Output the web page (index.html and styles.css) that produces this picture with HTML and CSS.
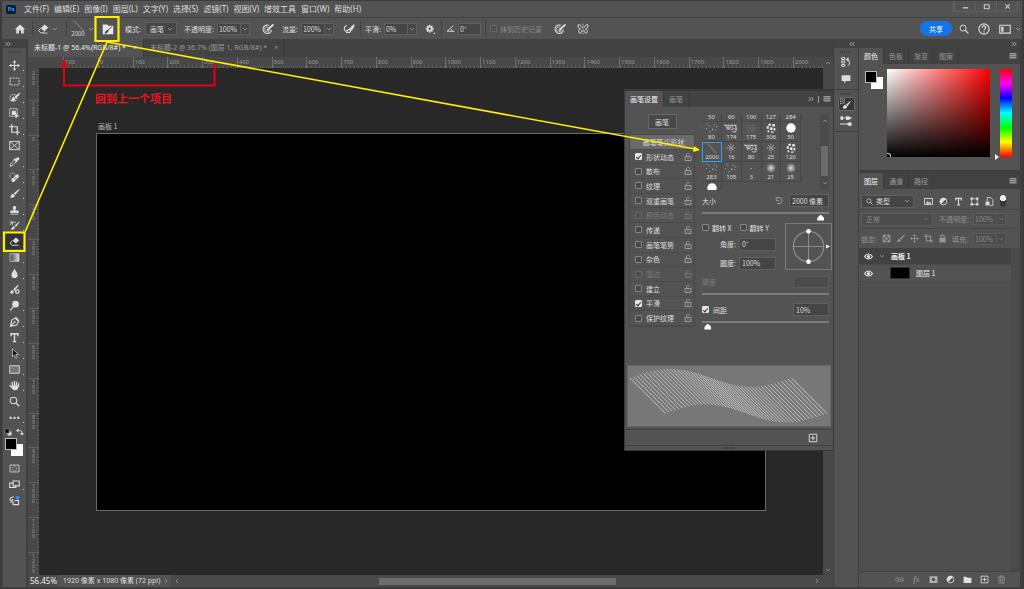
FILE: index.html
```html
<!DOCTYPE html>
<html lang="zh-CN">
<head>
<meta charset="utf-8">
<title>未标题-1</title>
<link rel="stylesheet" href="styles.css">
</head>
<body>
<svg class="sprite" aria-hidden="true">
  <symbol id="home" viewBox="0 0 16 16"><path fill="currentColor" d="M8 2 1 8.400h2V14h3.600v-4h2.800v4H13V8.400h2z"/></symbol>
  <symbol id="eraser" viewBox="0 0 16 16"><path fill="currentColor" d="M10 2l5 4-5 5-5-4z"/><path fill="none" stroke="currentColor" stroke-width="1.200" d="M5 7 2 10l3 3h3l2-2M8 13.500h6"/></symbol>
  <symbol id="down" viewBox="0 0 16 16"><path fill="none" stroke="currentColor" stroke-width="2" d="M3 5.500 8 10.500 13 5.500"/></symbol>
  <symbol id="up" viewBox="0 0 16 16"><path fill="none" stroke="currentColor" stroke-width="2" d="M3 10.500 8 5.500 13 10.500"/></symbol>
  <symbol id="right" viewBox="0 0 16 16"><path fill="none" stroke="currentColor" stroke-width="2" d="M5.500 3 10.500 8 5.500 13"/></symbol>
  <symbol id="left" viewBox="0 0 16 16"><path fill="none" stroke="currentColor" stroke-width="2" d="M10.500 3 5.500 8 10.500 13"/></symbol>
  <symbol id="dright" viewBox="0 0 16 16"><path fill="none" stroke="currentColor" stroke-width="2" d="M2 3l5 5-5 5M9 3l5 5-5 5"/></symbol>
  <symbol id="dleft" viewBox="0 0 16 16"><path fill="none" stroke="currentColor" stroke-width="2" d="M7 3 2 8l5 5M14 3 9 8l5 5"/></symbol>
  <symbol id="brushpanel" viewBox="0 0 16 16"><path fill="#e8e8e8" d="M1 2h6l1 1.500h7V15H1z"/><path d="M13 5 8 9.500M7.500 9.500l1 1.200-3 2.800-1.200 0 .4-2z" fill="#444" stroke="#444" stroke-width="1.300"/></symbol>
  <symbol id="pressure" viewBox="0 0 16 16"><path fill="none" stroke="currentColor" stroke-width="1.400" d="M9.500 3.200A5.700 5.700 0 1 0 12.700 9"/><path fill="currentColor" d="M14.500 1 16 2.500 9 9.500l-3 1 1-3z"/><path fill="none" stroke="currentColor" d="M8 5.500A3.300 3.300 0 1 0 10 9"/></symbol>
  <symbol id="airbrush" viewBox="0 0 16 16"><path fill="none" stroke="currentColor" stroke-width="1.500" d="M5 3C1 5 1 9 3 10.500s3-2 5-2 3 2 1 4H4"/><path fill="currentColor" d="M15 1 9 6.500v3l3 .5 3-5z"/></symbol>
  <symbol id="gear" viewBox="0 0 16 16"><circle cx="7.500" cy="7.500" r="3.400" fill="none" stroke="currentColor" stroke-width="2.800"/><path stroke="currentColor" stroke-width="2.200" d="M7.500 1v2.500M7.500 11.500V14M1 7.500h2.500M11.500 7.500H14M3 3l1.500 1.500M10.500 10.500 12 12M12 3l-1.500 1.500M4.500 10.500 3 12"/><path fill="currentColor" d="M14 14h2v2h-2z"/></symbol>
  <symbol id="angle" viewBox="0 0 16 16"><path fill="none" stroke="currentColor" stroke-width="1.600" d="M13 3 2 13h13M8 8c2 1 2.500 3 2.500 5"/></symbol>
  <symbol id="butterfly" viewBox="0 0 16 16"><path fill="none" stroke="currentColor" stroke-width="1.300" d="M6.500 6C5 2.500 1.500 1.500 1.500 2.500c0 3 0 5 3 5.500-3 1-2.500 5-1 5.500s3-1 3-4M9.500 6c1.500-3.500 5-4.500 5-3.500 0 3 0 5-3 5.500 3 1 2.500 5 1 5.500s-3-1-3-4"/><path stroke="currentColor" stroke-dasharray="2 1" d="M8 1v14"/></symbol>
  <symbol id="search" viewBox="0 0 16 16"><circle cx="6.500" cy="6.500" r="4.800" fill="none" stroke="currentColor" stroke-width="1.500"/><path stroke="currentColor" stroke-width="2" d="m10 10 5 5"/></symbol>
  <symbol id="help" viewBox="0 0 16 16"><circle cx="8" cy="8" r="6.800" fill="none" stroke="currentColor" stroke-width="1.500"/><path fill="none" stroke="currentColor" stroke-width="1.600" d="M5.700 6.300c0-3.300 4.800-3 4.600-.2C10.200 7.800 8 7.600 8 9.600M8 11v1.600"/></symbol>
  <symbol id="workspace" viewBox="0 0 16 16"><path fill="none" stroke="currentColor" stroke-width="1.400" d="M1 3h14v10.500H1z"/><path fill="currentColor" d="M3 5h3v6.500H3z"/></symbol>
  <symbol id="move" viewBox="0 0 16 16"><path stroke="currentColor" stroke-width="1.400" d="M8 3v10M3 8h10"/><path fill="currentColor" d="m8 0 2.500 3.500h-5zM8 16l2.500-3.500h-5zM0 8l3.500-2.500v5zM16 8l-3.500-2.500v5z"/></symbol>
  <symbol id="marquee" viewBox="0 0 16 16"><path fill="none" stroke="currentColor" stroke-width="1.400" stroke-dasharray="2.500 1.500" d="M1.500 3h13v10h-13z"/></symbol>
  <symbol id="quick" viewBox="0 0 16 16"><circle cx="6.500" cy="8.500" r="5" fill="none" stroke="currentColor" stroke-width="1.500" stroke-dasharray="2 1.400"/><path fill="currentColor" d="M15 1 8 7l2 2.500L16 3zM7 7c-4 1-1 5-5 5 3 3 8 1 7-3z"/></symbol>
  <symbol id="object" viewBox="0 0 16 16"><path fill="none" stroke="currentColor" stroke-width="1.300" d="M1 1h11v11H1z" stroke-dasharray="3 1"/><path fill="currentColor" d="M4 4h6v6H4zM8 6l7 6-3 .5-2 3z"/></symbol>
  <symbol id="crop" viewBox="0 0 16 16"><path fill="none" stroke="currentColor" stroke-width="1.800" d="M4 0v12h12M0 4h12v12"/></symbol>
  <symbol id="frame" viewBox="0 0 16 16"><path fill="none" stroke="currentColor" stroke-width="1.300" d="M1 2h14v12H1zM1 2l14 12M15 2 1 14"/></symbol>
  <symbol id="dropper" viewBox="0 0 16 16"><path fill="currentColor" d="M11 3c2-3 6 0 3 3l-2 1 .5 1-1.500 1.300L6.500 5 8 3.700l1 .3z"/><path fill="none" stroke="currentColor" stroke-width="1.300" d="M8 6 2.500 11.500 1.500 15l3-1L10.500 8.500"/></symbol>
  <symbol id="heal" viewBox="0 0 16 16"><path stroke="currentColor" stroke-width="5" stroke-linecap="round" d="m6 12 6-6"/><circle cx="5" cy="5.500" r="4" fill="none" stroke="currentColor" stroke-width="1.200" stroke-dasharray="1.500 1"/><path stroke="#535353" d="m7 8 3 3M8.500 9.500l2-2"/></symbol>
  <symbol id="brush" viewBox="0 0 16 16"><path fill="currentColor" d="M15 1 7 7.500 9 10 15.500 2zM6 8.500c-3 0-2 4-5 4 2 3 7 2 7.500-1.500z"/></symbol>
  <symbol id="stamp" viewBox="0 0 16 16"><path fill="currentColor" d="M6.500 8C2 1 14 1 9.500 8v1.500H14V13H2V9.500h4.500zM2 14h12v1.200H2z"/></symbol>
  <symbol id="history" viewBox="0 0 16 16"><path fill="currentColor" d="M15 2 8 8l2 2 5.500-7zM7 9c-3 0-2 4-5 4 3 2 6 1 6.500-2z"/><path fill="none" stroke="currentColor" stroke-width="1.300" d="M1 3h4v4M2 7c1-4 6-5 8-3"/></symbol>
  <symbol id="bgeraser" viewBox="0 0 16 16"><path fill="currentColor" d="m10 2 5 4-5 5-5-4z"/><path fill="none" stroke="currentColor" stroke-width="1.300" d="M5 7 1.500 10l3 3.500H14"/></symbol>
  <symbol id="gradient" viewBox="0 0 16 16"><linearGradient id="lg"><stop stop-color="#444"/><stop offset="1" stop-color="#ddd"/></linearGradient><path fill="url(#lg)" stroke="currentColor" d="M1.500 2.500h13v11h-13z"/></symbol>
  <symbol id="drop" viewBox="0 0 16 16"><path fill="currentColor" d="M8 1c2 4 4.500 6 4.500 9a4.500 4.500 0 0 1-9 0C3.500 7 6 5 8 1z"/></symbol>
  <symbol id="mixer" viewBox="0 0 16 16"><path fill="currentColor" d="M13 1 6 8l2 2 6-8zM5 9c-3 0-2 3-4 4 3 2 6 1 6-2z"/><circle cx="12" cy="11" r="2.500" fill="none" stroke="currentColor" stroke-width="1.800"/></symbol>
  <symbol id="dodge" viewBox="0 0 16 16"><circle cx="9.500" cy="6" r="4.800" fill="currentColor"/><path stroke="currentColor" stroke-width="1.800" d="M7 9 2 15"/></symbol>
  <symbol id="pen" viewBox="0 0 16 16"><path fill="none" stroke="currentColor" stroke-width="1.500" d="m9 3 5 5-3 5-9 2 2-9zM2 15l6-6"/><path fill="currentColor" d="m10 1 5 5-1.500 1.500-5-5z"/><circle cx="8.500" cy="8.500" r="1.200" fill="currentColor"/></symbol>
  <symbol id="type" viewBox="0 0 16 16"><path fill="none" stroke="currentColor" stroke-width="2" d="M3 6V2.500h10V6M8 2.500V14M5.500 14h5"/></symbol>
  <symbol id="arrow" viewBox="0 0 16 16"><path fill="#111" stroke="currentColor" d="M5 1v12l3-3 2 5 2-1-2-4.500h4z"/></symbol>
  <symbol id="rect" viewBox="0 0 16 16"><path fill="#777" stroke="currentColor" stroke-width="1.300" d="M1 2.500h14v11H1z"/></symbol>
  <symbol id="hand" viewBox="0 0 16 16"><path fill="none" stroke="currentColor" stroke-width="1.900" stroke-linecap="round" d="M5.500 9 4.500 3.500M8 8V2M10.500 8.500l.8-5.500M13 9.500l1.300-4M4.500 11 1.500 8"/><path fill="currentColor" d="M4 8.500h10c0 4-2 6.500-5 6.500s-4-2-6-5z"/></symbol>
  <symbol id="dots" viewBox="0 0 16 16"><path fill="currentColor" d="M1 7h3v3H1zM6.500 7h3v3h-3zM12 7h3v3h-3z"/></symbol>
  <symbol id="mask" viewBox="0 0 16 16"><path fill="none" stroke="currentColor" stroke-width="1.200" d="M1.500 3h13v10h-13z"/><circle cx="8" cy="8" r="3" fill="none" stroke="currentColor" stroke-dasharray="1.500 .8"/></symbol>
  <symbol id="screen" viewBox="0 0 16 16"><path fill="none" stroke="currentColor" stroke-width="1.500" d="M6 3h9v7H6zM6 6H1v6.500h9V10"/></symbol>
  <symbol id="cloud" viewBox="0 0 16 16"><path fill="none" stroke="currentColor" stroke-width="1.500" d="M7 3C2 2 0 7 3 9M6 6l-3 4 4 1M8 8h6v6H6v-3"/><circle cx="12.500" cy="4" r="3" fill="#2d8ceb"/></symbol>
  <symbol id="swap" viewBox="0 0 16 16"><path fill="none" stroke="currentColor" stroke-width="2" d="M3 5h4c4 0 5 2 5 6"/><path fill="currentColor" d="M5 1v8L0 5zM8 10h8l-4 5z"/></symbol>
  <symbol id="default" viewBox="0 0 16 16"><path fill="#ddd" d="M7 7h8v8H7z"/><path fill="#111" stroke="#aaa" d="M1.500 1.500h9v9h-9z"/></symbol>
  <symbol id="hist" viewBox="0 0 16 16"><path fill="none" stroke="currentColor" stroke-width="1.500" d="M1 1h5v3H1zM1 6.500h5v3H1zM1 12h5v3H1zM9 4c6 0 6 7 2 10"/><path fill="currentColor" d="M12 0v8L8 4z"/></symbol>
  <symbol id="comment" viewBox="0 0 16 16"><path fill="currentColor" d="M1 2h14v9H8l-3 4v-4H1z"/></symbol>
  <symbol id="brushset" viewBox="0 0 16 16"><path fill="currentColor" d="M15.500 3 8 8.500l2 2.500zM7 9c-3 0-2 4-4 4 3 3 7 1 6.500-2z"/><path stroke="currentColor" stroke-width="1.200" d="M0 1.500h4M0 4.500h4M0 7.500h4M5.500 1v7" stroke-dasharray="1.500 .8"/></symbol>
  <symbol id="sliders" viewBox="0 0 16 16"><path stroke="currentColor" stroke-width="1.500" d="M0 4h16M0 12h16"/><path fill="currentColor" d="M8 1.500h4l3 2.500-3 2.500H8zM1 1.500h3v5H1zM15 9.500h-3L9 12l3 2.500h3z"/></symbol>
  <symbol id="menu" viewBox="0 0 16 16"><path stroke="currentColor" stroke-width="3" d="M1 3.500h14M1 7.500h14M1 11.500h14"/></symbol>
  <symbol id="image" viewBox="0 0 16 16"><path fill="none" stroke="currentColor" stroke-width="1.600" d="M1 2.500h14v11H1z"/><path fill="currentColor" d="m3 12 3.500-5 2.500 3 1.500-2L13 12z"/></symbol>
  <symbol id="adjust" viewBox="0 0 16 16"><circle cx="8" cy="8" r="6" fill="none" stroke="currentColor" stroke-width="1.500"/><path fill="currentColor" d="M12.500 3.500A6.300 6.300 0 0 0 3.500 12.500z"/></symbol>
  <symbol id="shape" viewBox="0 0 16 16"><path fill="none" stroke="currentColor" stroke-width="1.400" d="M3 3h10v10H3z"/><path fill="currentColor" d="M1 1h4v4H1zM11 1h4v4h-4zM1 11h4v4H1zM11 11h4v4h-4z"/></symbol>
  <symbol id="smart" viewBox="0 0 16 16"><path fill="none" stroke="currentColor" stroke-width="1.500" d="M4 7V1h6l4 4v10H9"/><path fill="currentColor" d="M1 8h7v7H1z"/></symbol>
  <symbol id="checker" viewBox="0 0 16 16"><path fill="none" stroke="currentColor" stroke-width="1.500" d="M2 2h12v12H2z"/><path fill="currentColor" d="M2 2h4v4H2zM10 2h4v4h-4zM6 6h4v4H6zM2 10h4v4H2zM10 10h4v4h-4z"/></symbol>
  <symbol id="lock" viewBox="0 0 16 16"><path fill="currentColor" d="M2.500 7h11v8h-11z"/><path fill="none" stroke="currentColor" stroke-width="1.800" d="M5 7V4c0-3 6-3 6 0v3"/></symbol>
  <symbol id="unlock" viewBox="0 0 16 16"><path fill="none" stroke="currentColor" stroke-width="1.700" d="M2 7h12v8H2zM5 7V4c0-4 6-4 6-1M8 9.500v3"/></symbol>
  <symbol id="eye" viewBox="0 0 16 16"><path fill="none" stroke="currentColor" stroke-width="2" d="M1 8c4-6 10-6 14 0-4 6-10 6-14 0z"/><circle cx="8" cy="8" r="2.700" fill="currentColor"/></symbol>
  <symbol id="link" viewBox="0 0 16 16"><path fill="none" stroke="currentColor" stroke-width="1.700" d="M7 6C6 4 1 4 1 8s5 4 6 2M9 6c1-2 6-2 6 2s-5 4-6 2M5 8h6"/></symbol>
  <symbol id="folder" viewBox="0 0 16 16"><path fill="currentColor" d="M1 3h5l1.500 2H15v9H1z"/></symbol>
  <symbol id="lmask" viewBox="0 0 16 16"><path fill="currentColor" fill-rule="evenodd" d="M1 2h14v12H1zM8 5a3 3 0 1 0 .1 0z"/></symbol>
  <symbol id="plus" viewBox="0 0 16 16"><path fill="none" stroke="currentColor" stroke-width="1.500" d="M2 2h12v12H2zM8 4.500v7M4.500 8h7"/></symbol>
  <symbol id="trash" viewBox="0 0 16 16"><path fill="none" stroke="currentColor" stroke-width="1.700" d="M1.500 4h13M6 4V1.500h4V4M3.500 4v10.500h9V4M6.500 6v7M9.500 6v7"/></symbol>
  <symbol id="reset" viewBox="0 0 16 16"><path fill="none" stroke="currentColor" stroke-width="1.700" d="M4 3h6c6 1 5 10-1 10.500H6"/><path fill="none" stroke="currentColor" stroke-width="1.500" d="M4 3v5h5"/></symbol>
  <symbol id="t-dots" viewBox="0 0 20 14"><path fill="#ccc" d="M3 7h1v1H3zM6 4h1v1H6zM7 11h1.500v1H7zM12 3h1v1h-1zM10 8h1.500v1H10zM14 9h1v1h-1zM15 5h1v1h-1zM4 2h1v1H4z"/></symbol>
  <symbol id="t-rough" viewBox="0 0 20 14"><path fill="none" stroke="#c8c8c8" stroke-width="1.300" stroke-dasharray="4 .5 2 .7" d="M2 4h15M4 6h8M5 8h4M10 9c4-2 6-1 6 1s-4 2-5 1M15 4l2 5"/></symbol>
  <symbol id="t-faint" viewBox="0 0 20 14"><path fill="none" stroke="#777" stroke-dasharray="1 1" d="M5 4h10M4 6h12M5 8h11M4 10h11M6 12h8"/></symbol>
  <symbol id="t-blob" viewBox="0 0 20 14"><path fill="#e8e8e8" d="M7 2h3v2.500H7zM11 3l3-1 1 3-3 .5zM5 5h2.500v3H5zM9 6l3 .5-.5 3-3-.5zM13 7h2v3h-2zM6 9.500l2 .5v2H6zM10 11h3v1.500h-3z"/></symbol>
  <symbol id="t-splat" viewBox="0 0 20 14"><path stroke="#bbb" stroke-dasharray="1.500 .8" d="M10 2v11M5 7h10M6.500 3.500l7 7M13.500 3.500l-7 7"/></symbol>
  <symbol id="t-round" viewBox="0 0 20 14"><circle cx="10" cy="7" r="5.500" fill="#fff"/></symbol>
  <symbol id="t-soft" viewBox="0 0 20 14"><radialGradient id="rg"><stop stop-color="#ddd"/><stop offset="1" stop-color="#ddd" stop-opacity="0"/></radialGradient><circle cx="10" cy="7" r="6" fill="url(#rg)"/></symbol>
  <symbol id="t-line" viewBox="0 0 20 14"><path stroke="#aaa" stroke-width=".8" d="m5 2 10 11"/></symbol>
  <symbol id="t-small" viewBox="0 0 20 14"><path fill="#ccc" d="M9.500 7h1.200v1.200H9.500z"/></symbol>
</svg>

<div class="app">
  <header class="menubar">
    <span class="logo">Ps</span>
    <nav class="menus">
      <button>文件(F)</button><button>编辑(E)</button><button>图像(I)</button><button>图层(L)</button><button>文字(Y)</button><button>选择(S)</button><button>滤镜(T)</button><button>视图(V)</button><button>增效工具</button><button>窗口(W)</button><button>帮助(H)</button>
    </nav>
    <div class="winbtns">
      <button aria-label="最小化"><svg viewBox="0 0 16 16"><path stroke="currentColor" stroke-width="3" d="M2 11h12"/></svg></button>
      <button aria-label="最大化"><svg viewBox="0 0 16 16"><path fill="none" stroke="currentColor" stroke-width="2.500" d="M3 4h11v9H3z"/></svg></button>
      <button aria-label="关闭"><svg viewBox="0 0 16 16"><path stroke="currentColor" stroke-width="2.500" d="m3 3 10 10M13 3 3 13"/></svg></button>
    </div>
  </header>

  <div class="options">
    <div class="og center"><button aria-label="主页"><svg class="i12"><use href="#home"/></svg></button></div>
    <div class="og sep"><button aria-label="橡皮擦"><svg class="i12"><use href="#eraser"/></svg></button><svg class="i6"><use href="#down"/></svg></div>
    <div class="og sep"><button class="tip" aria-label="画笔预设"><svg viewBox="0 0 14 12"><path stroke="#bbb" stroke-width=".6" d="m2 0 11 12"/></svg><span>2000</span></button><svg class="i6"><use href="#down"/></svg></div>
    <div class="og center"><button aria-label="切换画笔设置面板"><svg class="i12"><use href="#brushpanel"/></svg></button></div>
    <div class="og pad"><label for="mode">模式:</label><span class="select mode"><select id="mode"><option>画笔</option></select><svg class="i6"><use href="#down"/></svg></span></div>
    <div class="og"><label for="opacity">不透明度:</label><span class="combo"><input id="opacity" value="100%"><button aria-label="不透明度选项"><svg class="i6"><use href="#down"/></svg></button></span></div>
    <div class="og center"><button aria-label="不透明度压力"><svg class="i12"><use href="#pressure"/></svg></button></div>
    <div class="og"><label for="flow">流量:</label><span class="combo"><input id="flow" value="100%"><button aria-label="流量选项"><svg class="i6"><use href="#down"/></svg></button></span></div>
    <div class="og center"><button aria-label="喷枪"><svg class="i12"><use href="#airbrush"/></svg></button></div>
    <div class="og sep"><label for="smooth">平滑:</label><span class="combo"><input id="smooth" value="0%"><button aria-label="平滑选项"><svg class="i6"><use href="#down"/></svg></button></span></div>
    <div class="og center"><button aria-label="平滑设置"><svg class="i10"><use href="#gear"/></svg></button></div>
    <div class="og sep"><svg class="i8"><use href="#angle"/></svg><input class="grow" aria-label="角度" value="0°"></div>
    <div class="og sep dim"><input type="checkbox" id="erasehist" disabled><label for="erasehist">抹到历史记录</label></div>
    <div class="og center"><button aria-label="大小压力"><svg class="i12"><use href="#pressure"/></svg></button></div>
    <div class="og center"><button aria-label="对称"><svg class="i12"><use href="#butterfly"/></svg></button></div>
    <div class="right-tools">
      <button class="share">共享</button>
      <button aria-label="搜索"><svg class="i10"><use href="#search"/></svg></button>
      <button aria-label="帮助"><svg class="i12"><use href="#help"/></svg></button>
      <button class="ws" aria-label="工作区"><svg class="i12"><use href="#workspace"/></svg><svg class="i6"><use href="#down"/></svg></button>
    </div>
  </div>

  <main class="work">
    <aside class="tools">
      <div class="strip"><svg class="i6"><use href="#dright"/></svg></div>
      <div class="toolbody">
        <div class="grip"></div>
        <button class="sub" aria-label="移动"><svg><use href="#move"/></svg></button>
        <button class="sub" aria-label="选框"><svg><use href="#marquee"/></svg></button>
        <button class="sub" aria-label="快速选择"><svg><use href="#quick"/></svg></button>
        <button class="sub" aria-label="对象选择"><svg><use href="#object"/></svg></button>
        <button class="sub" aria-label="裁剪"><svg><use href="#crop"/></svg></button>
        <button aria-label="图框"><svg><use href="#frame"/></svg></button>
        <button class="sub" aria-label="吸管"><svg><use href="#dropper"/></svg></button>
        <button class="sub" aria-label="修复"><svg><use href="#heal"/></svg></button>
        <button class="sub" aria-label="画笔"><svg><use href="#brush"/></svg></button>
        <button class="sub" aria-label="图章"><svg><use href="#stamp"/></svg></button>
        <button class="sub" aria-label="历史记录画笔"><svg><use href="#history"/></svg></button>
        <button class="sub on" aria-label="橡皮擦工具"><svg><use href="#bgeraser"/></svg></button>
        <button class="sub" aria-label="渐变"><svg><use href="#gradient"/></svg></button>
        <button class="sub" aria-label="模糊"><svg><use href="#drop"/></svg></button>
        <button aria-label="混合"><svg><use href="#mixer"/></svg></button>
        <button class="sub" aria-label="减淡"><svg><use href="#dodge"/></svg></button>
        <button class="sub" aria-label="钢笔"><svg><use href="#pen"/></svg></button>
        <button class="sub" aria-label="文字"><svg><use href="#type"/></svg></button>
        <button class="sub" aria-label="路径选择"><svg><use href="#arrow"/></svg></button>
        <button class="sub" aria-label="矩形"><svg><use href="#rect"/></svg></button>
        <button class="sub" aria-label="抓手"><svg><use href="#hand"/></svg></button>
        <button aria-label="缩放"><svg><use href="#search"/></svg></button>
        <button class="sub" aria-label="更多工具"><svg><use href="#dots"/></svg></button>
        <div class="mini"><svg class="i8"><use href="#default"/></svg><svg class="i8"><use href="#swap"/></svg></div>
        <div class="swatches"><i></i><b></b></div>
        <button aria-label="快速蒙版"><svg><use href="#mask"/></svg></button>
        <button class="sub" aria-label="屏幕模式"><svg><use href="#screen"/></svg></button>
        <button aria-label="云"><svg><use href="#cloud"/></svg></button>
      </div>
    </aside>

    <section class="doc">
      <div class="doctabs">
        <button class="tab active">未标题-1 @ 56.4%(RGB/8#) *<span>×</span></button>
        <button class="tab">未标题-2 @ 36.7% (图层 1, RGB/8#) *<span>×</span></button>
      </div>
      <div class="view">
        <div class="corner"></div>
        <div class="hruler" id="hruler"></div>
        <div class="vruler" id="vruler"></div>
        <div class="canvas">
          <span class="abname">画板 1</span>
          <div class="artboard"></div>
        </div>
        <div class="vscroll"><svg class="i6"><use href="#up"/></svg><svg class="i6"><use href="#down"/></svg></div>
      </div>
      <footer class="status">
        <span class="zoom">56.45%</span>
        <span class="info">1920 像素 x 1080 像素 (72 ppi)<svg class="i6"><use href="#right"/></svg></span>
        <div class="hscroll"><svg class="i6"><use href="#left"/></svg><i></i><svg class="i6"><use href="#right"/></svg></div>
      </footer>
    </section>

    <aside class="dock">
      <div class="strip end"><svg class="i6"><use href="#dleft"/></svg></div>
      <div class="dockgroup"><div class="grip"></div><button aria-label="历史记录"><svg class="i10"><use href="#hist"/></svg></button><button aria-label="注释"><svg class="i10"><use href="#comment"/></svg></button></div>
      <div class="dockgroup"><div class="grip"></div><button class="on" aria-label="画笔设置"><svg class="i12"><use href="#brushset"/></svg></button><button aria-label="画笔"><svg class="i12"><use href="#sliders"/></svg></button></div>
      <div class="dockfill"></div>
    </aside>

    <aside class="panels">
      <div class="strip end"><svg class="i6"><use href="#dright"/></svg></div>
      <section class="panel">
        <div class="ptabs"><button class="active">颜色</button><button>色板</button><button>渐变</button><button>图案</button><svg class="i8"><use href="#menu"/></svg></div>
        <div class="color">
          <div class="swatches"><i></i><b></b></div>
          <div class="field"><em></em></div>
          <div class="hue"></div>
        </div>
      </section>
      <section class="panel layers">
        <div class="ptabs"><button class="active">图层</button><button>通道</button><button>路径</button><svg class="i8"><use href="#menu"/></svg></div>
        <div class="lrow filter">
          <span class="select kind"><svg class="i8 lead"><use href="#search"/></svg><select aria-label="筛选类型"><option>类型</option></select><svg class="i6"><use href="#down"/></svg></span>
          <div class="ficons"><svg class="i8"><use href="#image"/></svg><svg class="i8"><use href="#adjust"/></svg><svg class="i8"><use href="#type"/></svg><svg class="i8"><use href="#shape"/></svg><svg class="i8"><use href="#smart"/></svg><span class="toggle"></span></div>
        </div>
        <div class="lrow dim">
          <span class="select blend"><select aria-label="混合模式" disabled><option>正常</option></select><svg class="i6"><use href="#down"/></svg></span>
          <label for="lop">不透明度:</label><span class="combo"><input id="lop" value="100%" disabled><button disabled aria-label="图层不透明度"><svg class="i6"><use href="#down"/></svg></button></span>
        </div>
        <div class="lrow dim locks">
          <span>锁定:</span><svg class="i8"><use href="#checker"/></svg><svg class="i8"><use href="#brush"/></svg><svg class="i8"><use href="#move"/></svg><svg class="i8"><use href="#crop"/></svg><svg class="i8"><use href="#lock"/></svg>
          <label for="lfill">填充:</label><span class="combo"><input id="lfill" value="100%" disabled><button disabled aria-label="填充选项"><svg class="i6"><use href="#down"/></svg></button></span>
        </div>
        <div class="llist">
          <div class="layer sel"><svg class="i8"><use href="#eye"/></svg><svg class="i6"><use href="#down"/></svg><b>画板 1</b></div>
          <div class="layer child"><svg class="i8"><use href="#eye"/></svg><i></i><span>图层 1</span></div>
        </div>
        <div class="lfoot">
          <button class="off" aria-label="链接"><svg class="i8"><use href="#link"/></svg></button>
          <button class="fx off">fx</button>
          <button class="mid" aria-label="蒙版"><svg class="i8"><use href="#lmask"/></svg></button>
          <button aria-label="调整"><svg class="i8"><use href="#adjust"/></svg></button>
          <button aria-label="新建组"><svg class="i8"><use href="#folder"/></svg></button>
          <button aria-label="新建图层"><svg class="i8"><use href="#plus"/></svg></button>
          <button class="off" aria-label="删除"><svg class="i8"><use href="#trash"/></svg></button>
        </div>
      </section>
    </aside>
  </main>

  <section class="brushwin">
    <div class="ptabs"><button class="active">画笔设置</button><button>画笔</button><svg class="i6"><use href="#dright"/></svg><span class="bar"></span><svg class="i8"><use href="#menu"/></svg></div>
    <div class="bbody">
      <div class="bleft">
        <button class="bbtn">画笔</button>
        <div class="blist">
          <div class="bhead">画笔笔尖形状</div>
          <div><input type="checkbox" id="b1" checked><label for="b1">形状动态</label><svg class="i8"><use href="#unlock"/></svg></div>
          <div><input type="checkbox" id="b2"><label for="b2">散布</label><svg class="i8"><use href="#unlock"/></svg></div>
          <div><input type="checkbox" id="b3"><label for="b3">纹理</label><svg class="i8"><use href="#unlock"/></svg></div>
          <div><input type="checkbox" id="b4"><label for="b4">双重画笔</label><svg class="i8"><use href="#unlock"/></svg></div>
          <div class="dis"><input type="checkbox" id="b5" disabled><label for="b5">颜色动态</label><svg class="i8"><use href="#unlock"/></svg></div>
          <div><input type="checkbox" id="b6"><label for="b6">传递</label><svg class="i8"><use href="#unlock"/></svg></div>
          <div><input type="checkbox" id="b7"><label for="b7">画笔笔势</label><svg class="i8"><use href="#unlock"/></svg></div>
          <div><input type="checkbox" id="b8"><label for="b8">杂色</label><svg class="i8"><use href="#unlock"/></svg></div>
          <div class="dis"><input type="checkbox" id="b9" disabled><label for="b9">湿边</label><svg class="i8"><use href="#unlock"/></svg></div>
          <div><input type="checkbox" id="b10"><label for="b10">建立</label><svg class="i8"><use href="#unlock"/></svg></div>
          <div><input type="checkbox" id="b11" checked><label for="b11">平滑</label><svg class="i8"><use href="#unlock"/></svg></div>
          <div><input type="checkbox" id="b12"><label for="b12">保护纹理</label><svg class="i8"><use href="#unlock"/></svg></div>
        </div>
      </div>
      <div class="bright">
        <div class="tipbox">
          <div class="tips" id="tips"></div>
          <div class="tscroll"><svg class="i6"><use href="#up"/></svg><i></i><svg class="i6"><use href="#down"/></svg></div>
        </div>
        <div class="brow size"><label for="size">大小</label><svg class="i8"><use href="#reset"/></svg><input class="num w40" value="2000 像素" aria-label="大小数值"></div>
        <input type="range" id="size" value="96">
        <div class="geo">
          <div class="flips"><input type="checkbox" id="fx"><label for="fx">翻转 X</label><input type="checkbox" id="fy"><label for="fy">翻转 Y</label></div>
          <div class="gline"><label for="ang">角度:</label><input class="num" id="ang" value="0°"></div>
          <div class="gline"><label for="rnd">圆度:</label><input class="num" id="rnd" value="100%"></div>
          <svg class="compass" viewBox="0 0 46 46"><circle cx="23" cy="23" r="15.500" fill="none" stroke="#8a8a8a" stroke-width="1.300"/><path stroke="#8a8a8a" d="M7 23h32M23 7v32"/><circle cx="23" cy="7.500" r="2.400" fill="#fff"/><circle cx="23" cy="38.500" r="2.400" fill="#fff"/><path fill="#fff" d="m41 21 4 2-4 2z"/></svg>
        </div>
        <div class="brow faded"><label for="hard">硬度</label><input class="num w36" disabled aria-label="硬度数值"></div>
        <input type="range" id="hard" disabled>
        <div class="brow space"><input type="checkbox" id="sp" checked><label for="sp">间距</label><input class="num w36" value="10%" aria-label="间距数值"></div>
        <input type="range" aria-label="间距" value="2">
      </div>
    </div>
    <svg class="preview" viewBox="0 0 204 61"><path id="stroke" fill="none" stroke="#c4c4c4" stroke-width="1"/></svg>
    <div class="bfoot"><button aria-label="新建画笔"><svg class="i10"><use href="#plus"/></svg></button></div>
    <div class="bgrip"><div class="grip"></div></div>
  </section>

  <svg class="notes" viewBox="0 0 1024 589">
    <g fill="none" stroke="#e60012" stroke-width="2"><path d="M64 66v19.500h150.500V63"/><path fill="#e60012" stroke="none" d="m64 59 3.500 7h-7z"/></g>
    <g fill="none" stroke="#fff000" stroke-width="1.600"><path d="m107 42-82 190M107 42l588 107"/><path fill="#fff000" stroke="none" d="m700 150-7 2 1-6z"/></g>
    <g fill="none" stroke="#fff000" stroke-width="2.200"><path d="M95.500 17h23v24h-23zM4 232.500h20.500v18.500H4z"/></g>
    <text class="notetext" x="95" y="103">回到上一个项目</text>
  </svg>
</div>
<script src="app.js"></script>
</body>
</html>
```
FILE: styles.css
```css
* { box-sizing: border-box; }
body { margin: 0; background: #535353; }
.app {
  position: relative; display: flex; flex-direction: column; height: 100vh; overflow: hidden;
  border: solid #3c3c3c; border-width: 1px 2px 2px;
  font: 7px/10px "Noto Sans CJK SC", sans-serif; color: #dedede; background: #3f3f3f;
}
.sprite { position: absolute; width: 0; height: 0; }
button, input, select { font: inherit; color: inherit; margin: 0; padding: 0; border: 0; background: none; }
button { display: flex; align-items: center; justify-content: center; }
svg { display: block; flex: none; }
.i6 { width: 6px; height: 6px; color: #aaa; }
.i8 { width: 9px; height: 9px; }
.i10 { width: 10px; height: 10px; }
.i12 { width: 12px; height: 12px; }

input[type=checkbox] { appearance: none; width: 7px; height: 7px; border: 1px solid #858585; border-radius: 1px; flex: none; background: #484848; }
input[type=checkbox]:checked { background: #e4e4e4; border-color: #e4e4e4; display: grid; place-items: center; }
input[type=checkbox]:checked::after { content: ""; width: 2px; height: 4px; border: solid #333; border-width: 0 1px 1px 0; rotate: 40deg; }
input[type=checkbox]:disabled { opacity: .4; }

.menubar { display: flex; align-items: center; height: 17px; flex: none; background: #535353; border-bottom: 1px solid #434343; font-size: 8px; }
.logo { display: grid; place-items: center; width: 10px; height: 9px; margin: 0 8px 0 4px; border-radius: 2px; background: #001e36; color: #31a8ff; font: bold 6px/8px "Open Sans", sans-serif; }
.menus { display: flex; gap: 5px; flex: 1; }
.menus button { white-space: nowrap; font-family: "Noto Sans", "Noto Sans CJK SC", sans-serif; }
.winbtns { display: flex; align-self: flex-start; margin-right: 4px; border: solid #606060; border-width: 0 1px 1px; height: 11px; }
.winbtns button { width: 21px; border-left: 1px solid #606060; color: #ccc; }
.winbtns svg { width: 7px; height: 7px; }

.options {
  display: grid; align-items: center; height: 21px; flex: none; padding-left: 6px; background: #535353;
  grid-template-columns: 24px 34px 30px 24px 64px 70px 28px 56px 22px 59px 22px 44px 60px 30px 16px 1fr;
}
.og { display: flex; align-items: center; height: 15px; gap: 3px; white-space: nowrap; }
.og.center { justify-content: center; gap: 0; }
.og.sep { border-left: 1px solid #424242; padding-left: 4px; }
.og.pad { padding-left: 5px; gap: 4px; }
.dim { color: #8a8a8a; }
.tip { flex-direction: column; font-size: 6px; line-height: 6px; }
.tip svg { width: 14px; height: 11px; }
.og input:not([type]) , .combo input { background: #454545; border: 1px solid #606060; min-width: 0; padding-left: 1px; height: 12px; }
.og .grow { flex: 1; margin-right: 4px; }
.combo { display: flex; height: 12px; min-width: 0; }
.combo input { flex: 1; width: 20px; }
.combo button { width: 9px; background: #484848; border: 1px solid #606060; border-left: 0; }
.og .combo { flex: 0 0 33px; margin: 0 auto 0 0; }
.select { display: flex; align-items: center; height: 13px; border: 1px solid #606060; background: #454545; padding-right: 3px; }
.select select { appearance: none; flex: 1; min-width: 0; padding-left: 4px; opacity: 1; }
.mode { width: 32px; }
.right-tools { display: flex; align-items: center; justify-content: flex-end; gap: 9px; padding-right: 1px; }
.share { width: 32px; height: 15px; border-radius: 8px; background: #1473e6; color: #fff; font-size: 7px; margin-right: -2px; }
.ws { gap: 4px; }

.work { display: flex; flex: 1; min-height: 0; }
.strip { height: 9px; flex: none; background: #424242; padding: 2px 3px; display: flex; align-items: center; }
.strip.end { justify-content: flex-end; }
.strip .i6 { color: #ccc; }
.grip { height: 2px; margin: 3px auto 4px; width: 12px; background: repeating-linear-gradient(90deg, #404040 0 1px, #505050 1px 2px); }

.tools { width: 25px; display: flex; flex-direction: column; flex: none; }
.toolbody { flex: 1; background: #535353; border-left: 1px solid #484848; margin-right: 1px; }
.toolbody button { position: relative; width: 22px; height: 16px; }
.toolbody button svg { width: 11px; height: 11px; }
.toolbody .sub::after { content: ""; position: absolute; right: 1px; bottom: 2px; width: 1px; height: 1px; background: #ccc; }
.toolbody .on { background: #333; }
.mini { display: flex; justify-content: space-between; padding: 3px 2px 2px 1px; }
.mini .i8 { width: 8px; height: 8px; }
.toolbody .swatches { margin: 0 0 4px 2px; }
.swatches { display: grid; grid-template: 6px 6px 6px / 6px 6px 6px; flex: none; }
.swatches i { grid-area: 1 / 1 / 3 / 3; background: #000; border: 1px solid #bbb; z-index: 1; }
.swatches b { grid-area: 2 / 2 / 4 / 4; background: #fff; }

.doc { flex: 1; min-width: 0; display: flex; flex-direction: column; margin: 0 1px; }
.doctabs { display: flex; height: 18px; background: #424242; flex: none; }
.tab { padding: 0 6px; gap: 7px; color: #9a9a9a; border-right: 1px solid #383838; white-space: nowrap; font-size: 7px; font-family: "Noto Sans", "Noto Sans CJK SC", sans-serif; }
.tab.active { background: #535353; color: #eee; }
.view { flex: 1; min-height: 0; display: grid; grid-template: 11px minmax(0, 1fr) / 11px minmax(0, 1fr) 10px; }
.corner, .hruler, .vruler, .vscroll { background: #484848; }
.corner { grid-area: 1 / 1; }
.hruler { grid-area: 1 / 2; display: flex; overflow: hidden; padding-left: 24px; }
.hruler span { flex: none; border-left: 1px solid #707070; padding-left: 1px; font: 6px/11px "Noto Sans", sans-serif; color: #999; height: 11px; background: repeating-linear-gradient(90deg, #666 0 1px, transparent 1px 4px) 0 100% / 100% 2px no-repeat; }
.vruler { grid-area: 2 / 1; overflow: hidden; }
.vruler span { display: block; border-top: 1px solid #606060; padding: 1px 0 0 4px; font: 5px/5px "Noto Sans", sans-serif; color: #999; background: repeating-linear-gradient(#5c5c5c 0 1px, transparent 1px 4px) 100% 0 / 2px 100% no-repeat; }
.vruler span:first-child { margin-top: -3px; padding-top: 5px; }
.vruler b { display: block; font-weight: normal; }
.canvas { grid-area: 2 / 2; position: relative; background: #282828; overflow: hidden; }
.abname { position: absolute; left: 59px; top: 53px; color: #bbb; }
.artboard { position: absolute; left: 57px; top: 65px; width: 670px; height: 378px; background: #000; border: 1px solid #6a6a6a; }
.vscroll { grid-area: 1 / 3 / 3 / 4; display: flex; flex-direction: column; align-items: center; justify-content: space-between; padding: 3px 0 2px; }
.status { height: 12px; display: flex; align-items: center; background: #4a4a4a; flex: none; white-space: nowrap; font-family: "Noto Sans", "Noto Sans CJK SC", sans-serif; }
.zoom { width: 30px; padding-left: 2px; font-size: 8px; color: #eee; }
.info { display: flex; align-items: center; justify-content: space-between; width: 113px; height: 12px; padding: 0 2px 0 5px; background: #535353; }
.hscroll { flex: 1; display: grid; grid-template-columns: 6px 199fr 236fr 198fr 6px; align-items: center; padding: 0 13px 0 3px; }
.hscroll i { grid-column: 3; height: 7px; background: #6c6c6c; }
.hscroll svg:last-child { grid-column: 5; }

.dock { width: 24px; flex: none; display: flex; flex-direction: column; margin-right: 1px; }
.dockgroup { background: #535353; border-bottom: 1px solid #404040; padding-bottom: 2px; }
.dockgroup .grip { margin: 3px auto 0; }
.dockgroup button { width: 17px; height: 17px; margin: 0 auto; }
.dockgroup .on { height: 14px; margin: 2px auto 1px; background: #363636; border: 1px solid #6a6a6a; border-radius: 2px; }
.dockfill { flex: 1; background: #535353; }

.panels { width: 163px; flex: none; display: flex; flex-direction: column; padding-right: 2px; }
.panel { background: #535353; margin-bottom: 3px; }
.ptabs { display: flex; align-items: center; height: 16px; background: #424242; color: #999; flex: none; }
.ptabs button { height: 100%; padding: 0 5px; border-right: 1px solid #3a3a3a; white-space: nowrap; }
.ptabs .active { background: #535353; color: #f2f2f2; }
.ptabs .i8 { margin-left: auto; margin-right: 3px; width: 8px; height: 8px; color: #999; }
.color { display: grid; grid-template-columns: 18px 1fr 12px; gap: 0 10px; height: 106px; padding: 5px 8px 13px 6px; align-items: stretch; }
.color .field { margin-left: -6px; background: linear-gradient(transparent, #000), linear-gradient(90deg, #fff, #f00); display: flex; align-items: flex-end; overflow: hidden; }
.field em { width: 4px; height: 4px; border: 1px solid #ccc; border-width: 1px 1px 0 0; border-radius: 0 3px 0 0; }
.color .swatches { margin-top: 2px; align-self: start; }
.hue { background: linear-gradient(#f00, #f0f 17%, #00f 33%, #0ff 50%, #0f0 67%, #ff0 83%, #f00); position: relative; }
.hue::before { content: ""; position: absolute; left: -5px; bottom: -3px; border: solid transparent; border-width: 3px 0 3px 4px; border-left-color: #eee; }
.layers { flex: 1; display: flex; flex-direction: column; margin-bottom: 0; min-height: 0; }
.lrow { display: flex; align-items: center; gap: 3px; height: 19px; padding: 0 14px 0 2px; border-bottom: 1px solid #474747; white-space: nowrap; flex: none; }
.lrow.filter { height: 21px; padding-top: 4px; }
.kind { width: 53px; padding-left: 4px; }
.kind .lead { width: 7px; height: 7px; }
.kind select { padding-left: 3px; font-size: 7px; }
.ficons { display: flex; flex: 1; justify-content: space-between; padding: 0 0 0 7px; align-items: center; }
.toggle { width: 6px; height: 12px; border-radius: 3px; background: radial-gradient(circle at 3px 3px, #eee 0 3px, #383838 3px); }
.blend { width: 72px; margin-right: 3px; }
.dim .select, .dim .combo input, .dim .combo button { background: #4c4c4c; border-color: #5a5a5a; }
.dim .combo { flex: 0 0 33px; margin-left: auto; }
.dim .i6 { color: #777; }
.locks { gap: 5px; border: 0; color: #979797; }
.locks .combo { color: #8a8a8a; }
.llist { flex: 1; background: #4f4f4f; border-right: 9px solid #4a4a4a; }
.layer { display: flex; align-items: center; gap: 6px; height: 17px; padding-left: 5px; color: #eee; background: #535353; border-bottom: 1px solid #4a4a4a; }
.layer.sel { background: #424242; }
.layer.child { gap: 0; }
.layer.child i { width: 20px; height: 12px; margin: 0 6px 0 17px; background: #000; border: 1px solid #333; }
.lfoot { display: flex; justify-content: flex-end; gap: 8px; height: 16px; padding-right: 14px; border-top: 1px solid #424242; flex: none; }
.lfoot .off { color: #8a8a8a; }
.lfoot .mid { color: #b0b0b0; }
.fx { font: italic bold 8px/8px "Liberation Serif", serif; width: 9px; }

.brushwin { position: absolute; left: 622px; top: 88px; width: 210px; display: flex; flex-direction: column; background: #535353; border: 1px solid #383838; border-top-width: 2px; }
.brushwin .ptabs .i6 { margin-left: auto; color: #ccc; }
.brushwin .ptabs .i8 { margin: 0 2px 0 4px; }
.bar { width: 1px; height: 7px; margin-left: 4px; background: #999; }
.bbody { display: grid; grid-template-columns: 66px 1fr; gap: 7px; padding: 7px 4px 0 4px; height: 248px; }
.bleft { display: flex; flex-direction: column; align-items: center; height: 213px; }
.bbtn { width: 29px; height: 15px; border: 1px solid #686868; background: #484848; flex: none; }
.blist { flex: 1; width: 100%; margin-top: 5px; display: grid; grid-auto-rows: 1fr; border: 1px solid #484848; }
.blist > div { display: flex; align-items: center; gap: 4px; padding: 0 2px 0 5px; border-bottom: 1px solid #4b4b4b; min-height: 0; }
.blist label { flex: 1; }
.blist svg { color: #aaa; width: 8px; height: 8px; }
.blist .bhead { background: #6a6a6a; justify-content: center; }
.blist .dis { color: #7c7c7c; }
.blist .dis svg { color: #7c7c7c; }
.bright { display: flex; flex-direction: column; min-width: 0; }
.tipbox { display: flex; justify-content: space-between; height: 76px; overflow: hidden; flex: none; }
.tips { width: 99px; display: grid; grid-template-columns: repeat(5, 1fr); grid-auto-rows: 20px; margin-top: -12px; }
.tips button { flex-direction: column; justify-content: flex-end; border: 1px solid #464646; border-width: 0 1px 1px 0; font: 6px/7px "Noto Sans", sans-serif; }
.tips button:last-child { justify-content: flex-start; }
.tips svg { width: 18px; height: 12px; }
.tips .cur { border: 1px solid #3d9bf0; outline: 1px solid #3d9bf0; outline-offset: -1px; }
.tscroll { width: 9px; background: #4b4b4b; display: flex; flex-direction: column; align-items: center; padding: 4px 0; }
.tscroll i { margin: auto 0 4px; width: 7px; height: 30px; background: #6c6c6c; }
.brow { display: flex; align-items: center; height: 13px; flex: none; gap: 4px; }
.brow .num { margin-left: auto; }
.size { margin-top: 4px; }
.size svg { margin-left: auto; color: #aaa; }
.size .num { margin-left: 2px; }
.num { height: 13px; border: 1px solid #606060; background: #454545; padding-left: 2px; min-width: 0; }
.w40 { width: 40px; }
.w36 { width: 36px; }
.faded { color: #7c7c7c; margin-top: 4px; height: 12px; }
.faded .num { border-color: #5c5c5c; background: #4c4c4c; height: 12px; }
.space { margin-top: 7px; }
input[type=range] { appearance: none; width: 100%; height: 14px; flex: none; background: linear-gradient(#7c7c7c, #7c7c7c) 0 5px / 100% 2px no-repeat; }
input[type=range]::-webkit-slider-thumb { appearance: none; width: 7px; height: 6px; margin-top: 7px; background: #fff; clip-path: polygon(50% 0, 100% 60%, 100% 100%, 0 100%, 0 60%); }
input[type=range]:disabled { height: 8px; }
input[type=range]:disabled::-webkit-slider-thumb { visibility: hidden; }
.geo { display: grid; grid-template-columns: 74px 1fr; grid-template-rows: 13px 20px 18px; align-items: center; margin-right: -3px; column-gap: 9px; height: 51px; }
.flips { display: flex; align-items: center; gap: 3px; white-space: nowrap; grid-row: 1; grid-column: 1; }
.flips label + input { margin-left: 5px; }
.gline { display: flex; align-items: center; justify-content: flex-end; gap: 3px; grid-column: 1; }
.gline .num { width: 37px; }
.compass { grid-column: 2; grid-row: 1 / 4; width: 47px; height: 47px; border: 1px solid #7a7a7a; justify-self: end; }
.preview { margin: 10px 2px 2px; background: #777; border: 1px solid #666; }
.bfoot { height: 16px; border-top: 1px solid #404040; display: flex; align-items: center; justify-content: flex-end; padding-right: 15px; }
.bgrip { height: 5px; border-top: 1px solid #404040; }
.bgrip .grip { margin: 1px auto; }

.notes { position: absolute; left: -2px; top: -1px; width: 1024px; height: 589px; pointer-events: none; }
.notetext { fill: #e8141e; font: bold 11px "Noto Sans CJK SC", sans-serif; }
```
FILE: app.js
```js
const SCALE = 0.3475;

function ruler(id, from, to, side, render) {
  const host = document.getElementById(id);
  for (let v = from; v <= to; v += 100) {
    const cell = document.createElement('span');
    cell.style[side] = 100 * SCALE + 'px';
    render(cell, String(Math.abs(v)));
    host.append(cell);
  }
}

ruler('hruler', -100, 2000, 'width', (cell, text) => { cell.textContent = text; });
ruler('vruler', -200, 1200, 'height', (cell, text) => {
  for (const ch of text) {
    const digit = document.createElement('b');
    digit.textContent = ch;
    cell.append(digit);
  }
});

const tips = [
  ['round', 50], ['round', 60], ['round', 100], ['round', 127], ['round', 284],
  ['dots', 80], ['rough', 174], ['faint', 175], ['blob', 306], ['round', 50],
  ['line', 2000], ['splat', 16], ['rough', 80], ['splat', 25], ['blob', 120],
  ['dots', 283], ['dots', 105], ['small', 3], ['soft', 21], ['soft', 25],
  ['round', '']
];
document.getElementById('tips').innerHTML = tips.map(([kind, size]) =>
  `<button${size === 2000 ? ' class="cur"' : ''}><svg><use href="#t-${kind}"/></svg>${size}</button>`).join('');

let d = '';
for (let i = 0; i <= 48; i++) {
  const t = i / 48;
  const x = 2 + 163 * t;
  const y = 12 - 9 * Math.sin(2 * Math.PI * t);
  d += `M${x.toFixed(1)} ${y.toFixed(1)}l36 36`;
}
document.getElementById('stroke').setAttribute('d', d);
```
